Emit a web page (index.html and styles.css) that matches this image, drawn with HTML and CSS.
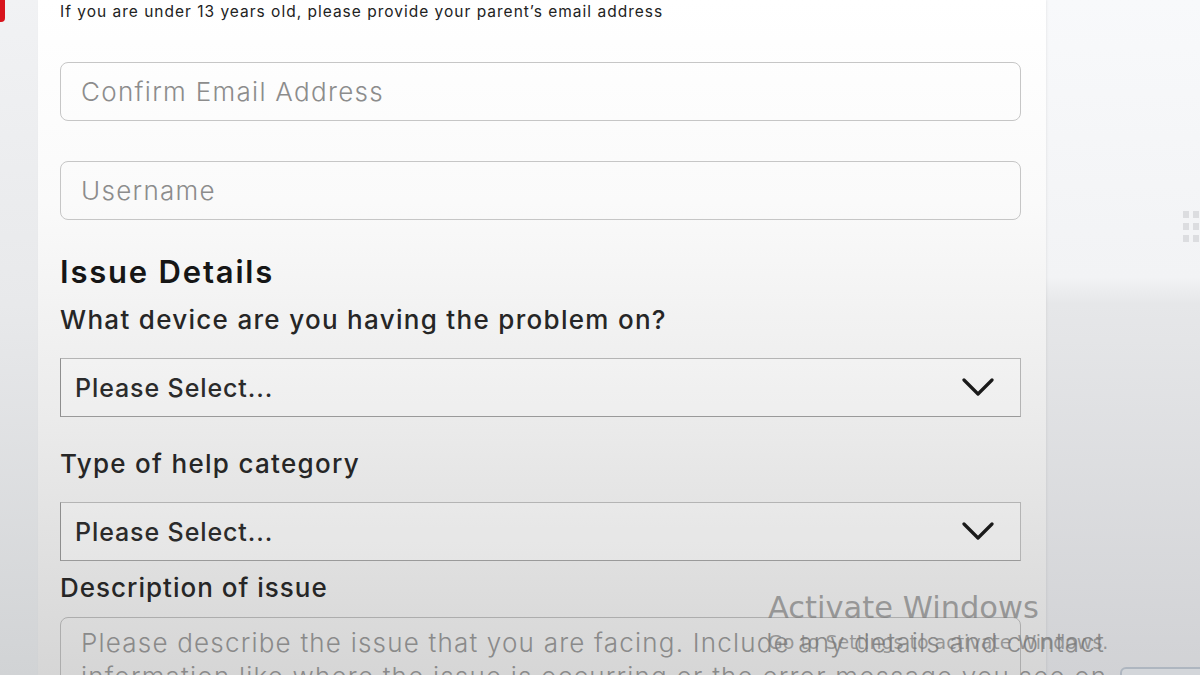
FILE: index.html
```html
<!DOCTYPE html>
<html lang="en">
<head>
  <meta charset="UTF-8">
  <meta name="viewport" content="width=device-width, initial-scale=1.0">
  <title>Support - Issue Details</title>
  <link rel="stylesheet" href="styles.css">
</head>
<body>
  <div class="page">
    <div class="rail">
      <span class="rail-mark"></span>
    </div>

    <main class="card">
      <p class="note">If you are under 13 years old, please provide your parent’s email address</p>

      <input class="field" type="email" placeholder="Confirm Email Address">
      <input class="field" type="text" placeholder="Username">

      <h2 class="section-title">Issue Details</h2>

      <label class="label">What device are you having the problem on?</label>
      <div class="select">
        <span>Please Select...</span>
        <svg class="chevron" width="32" height="20" viewBox="0 0 32 20">
          <path d="M2 2 L16 16 L30 2" fill="none" stroke="#1a1a1a" stroke-width="3.2" stroke-linecap="round" stroke-linejoin="round"/>
        </svg>
      </div>

      <label class="label label-gap">Type of help category</label>
      <div class="select">
        <span>Please Select...</span>
        <svg class="chevron" width="32" height="20" viewBox="0 0 32 20">
          <path d="M2 2 L16 16 L30 2" fill="none" stroke="#1a1a1a" stroke-width="3.2" stroke-linecap="round" stroke-linejoin="round"/>
        </svg>
      </div>

      <label class="label label-tight">Description of issue</label>
      <div class="area">
        <p class="area-hint">Please describe the issue that you are facing. Include any details and contact information like where the issue is occurring or the error message you see on the screen</p>
      </div>
    </main>

    <aside class="side">
      <div class="side-widget">
        <span></span><span></span>
        <span></span><span></span>
        <span></span><span></span>
      </div>
    </aside>
  </div>

  <div class="watermark">
    <div class="wm-title">Activate Windows</div>
    <div class="wm-sub">Go to Settings to activate Windows.</div>
  </div>
  <div class="corner-button"></div>
</body>
</html>
```

FILE: styles.css
```css
body {
  margin: 0;
  overflow: hidden;
  font-family: Inter, "Noto Sans", Arial, sans-serif;
  color: #1f1f1f;
  background: #e9eaec;
}
.page {
  display: flex;
  height: 675px;
}
.rail {
  width: 38px;
  flex-shrink: 0;
  background: linear-gradient(#f1f2f4 0%, #e8e9eb 45%, #d1d3d5 100%);
}
.rail-mark {
  display: block;
  width: 5px;
  height: 22px;
  background: #d8141c;
  border-radius: 0 0 4px 0;
}
.card {
  width: 986px;
  flex-shrink: 0;
  padding: 2px 0 0 22px;
  background: linear-gradient(#ffffff 0%, #fafafa 30%, #ebebeb 62%, #d6d6d6 100%);
  box-shadow: 1px 0 2px rgba(0,0,0,0.06);
  position: relative;
  z-index: 1;
}
.note {
  margin: 0;
  width: 961px;
  font-size: 15.5px;
  line-height: 20px;
  letter-spacing: 1px;
  color: #222;
}
.field {
  display: block;
  box-sizing: border-box;
  width: 961px;
  height: 59px;
  margin-top: 40px;
  padding: 0 20px;
  border: 1px solid #c6c6c6;
  border-radius: 8px;
  background: transparent;
  font-family: inherit;
  font-size: 26px;
  font-weight: 300;
  letter-spacing: 1.3px;
  outline: none;
}
.field::placeholder {
  color: #8c8c8c;
}
.section-title {
  margin: 35px 0 0;
  font-size: 31px;
  line-height: 34px;
  font-weight: 600;
  letter-spacing: 1.8px;
  color: #161616;
}
.label {
  display: block;
  margin-top: 16px;
  font-size: 26px;
  line-height: 30px;
  font-weight: 500;
  letter-spacing: 1.3px;
  color: #262626;
}
.label-gap {
  margin-top: 32px;
}
.label-tight {
  margin-top: 12px;
  letter-spacing: 1px;
}
.select {
  box-sizing: border-box;
  width: 961px;
  height: 59px;
  margin-top: 23px;
  padding: 0 26px 0 14px;
  display: flex;
  align-items: center;
  justify-content: space-between;
  border: 1px solid #b4b4b4;
  border-left-color: #8e8e8e;
  border-bottom-color: #9a9a9a;
  background: rgba(255,255,255,0.2);
  font-size: 25px;
  font-weight: 500;
  letter-spacing: 0.9px;
  color: #2b2b2b;
}
.chevron {
  display: block;
}
.area {
  box-sizing: border-box;
  width: 961px;
  height: 120px;
  margin-top: 14px;
  padding: 8px 20px;
  border: 1px solid #adadad;
  border-radius: 8px 8px 0 0;
}
.area-hint {
  margin: 0;
  width: 1035px;
  font-size: 26px;
  line-height: 34px;
  font-weight: 300;
  letter-spacing: 1.2px;
  color: #8a8a8a;
}
.side {
  flex: 1;
  padding-top: 211px;
  background: linear-gradient(#f8f9fb 0%, #f2f3f5 41%, #e6e7e9 45%, #d1d2d5 100%);
}
.side-widget {
  display: grid;
  grid-template-columns: 6px 6px;
  gap: 5px 4px;
  margin-left: 137px;
}
.side-widget span {
  width: 6px;
  height: 7px;
  background: #dcdde0;
}
.watermark {
  position: absolute;
  left: 768px;
  top: 590px;
  z-index: 2;
  color: rgba(120,120,120,0.7);
  font-family: "DejaVu Sans", sans-serif;
}
.wm-title {
  font-size: 30.5px;
  line-height: 36px;
}
.wm-sub {
  font-size: 19px;
  line-height: 24px;
  margin-top: 4px;
}
.corner-button {
  position: absolute;
  left: 1120px;
  top: 667px;
  z-index: 2;
  width: 90px;
  height: 30px;
  box-sizing: border-box;
  border: 2px solid #aeb6c0;
  border-radius: 6px;
  background: #d3d6da;
}
```
